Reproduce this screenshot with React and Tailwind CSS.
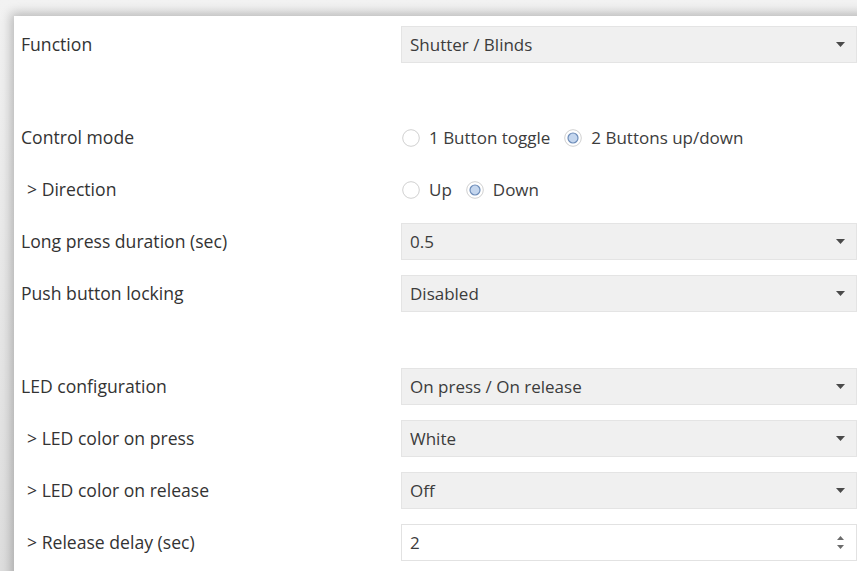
import React from "react";

const font = { fontFamily: '"Open Sans", "Noto Sans", sans-serif' };

function Caret() {
  return (
    <svg width="9" height="5" viewBox="0 0 9 5" className="shrink-0">
      <path d="M0 0 H9 L4.5 5 Z" fill="#4a4a4a" />
    </svg>
  );
}

function Spinner() {
  return (
    <div className="flex flex-col items-center gap-[5px] shrink-0">
      <svg width="7" height="4" viewBox="0 0 7 4">
        <path d="M0 4 H7 L3.5 0 Z" fill="#6b6b6b" />
      </svg>
      <svg width="7" height="4" viewBox="0 0 7 4">
        <path d="M0 0 H7 L3.5 4 Z" fill="#6b6b6b" />
      </svg>
    </div>
  );
}

function Radio({ checked }) {
  return (
    <svg width="18" height="18" viewBox="0 0 18 18" className="shrink-0">
      <circle cx="9" cy="9" r="8.3" fill="#ffffff" stroke="#d0d0d0" strokeWidth="1" />
      {checked && (
        <circle cx="9" cy="9" r="5" fill="#c4d6ee" stroke="#6d8cb8" strokeWidth="1.2" />
      )}
    </svg>
  );
}

function Select({ value }) {
  return (
    <div className="flex h-full flex-1 items-center justify-between border border-[#e4e4e4] bg-[#f0f0f0] pl-[8px] pr-[11px]">
      <span className="text-[#3c3c3c]">{value}</span>
      <Caret />
    </div>
  );
}

function NumberBox({ value }) {
  return (
    <div className="flex h-full flex-1 items-center justify-between border border-[#e2e2e2] bg-white pl-[8px] pr-[12px]">
      <span className="text-[#3c3c3c]">{value}</span>
      <Spinner />
    </div>
  );
}

function RadioGroup({ options, selected }) {
  return (
    <div className="flex h-full items-center gap-[14px] pl-[1px]">
      {options.map((o, i) => (
        <label key={o} className="flex items-center gap-[9px] text-[#3c3c3c]">
          <Radio checked={i === selected} />
          <span>{o}</span>
        </label>
      ))}
    </div>
  );
}

function Row({ label, sub, children, spaced }) {
  return (
    <div className={`flex h-[37px] items-center ${spaced ? "mt-[56px]" : "mt-[15px]"}`}>
      <div
        className={`w-[387px] shrink-0 text-[17.6px] text-[#333333] ${sub ? "pl-[13px]" : "pl-[7px]"}`}
      >
        {sub ? "> " : ""}
        {label}
      </div>
      <div className="flex h-full flex-1 items-center">{children}</div>
    </div>
  );
}

export default function App() {
  return (
    <div
      className="relative h-[571px] w-[857px] overflow-hidden bg-white text-[17px]"
      style={font}
    >
      <div className="absolute inset-0 bg-gradient-to-b from-[#f2f2f2] to-[#dedede]" />
      <div className="relative ml-[14px] mt-[16px] h-[700px] w-[900px] bg-white pt-[10px] shadow-[-3px_-3px_10px_rgba(0,0,0,0.24)]">
        <div className="w-[857px] -mt-[15px] pr-[14px]">
          <Row label="Function">
            <Select value="Shutter / Blinds" />
          </Row>
          <Row label="Control mode" spaced>
            <RadioGroup options={["1 Button toggle", "2 Buttons up/down"]} selected={1} />
          </Row>
          <Row label="Direction" sub>
            <RadioGroup options={["Up", "Down"]} selected={1} />
          </Row>
          <Row label="Long press duration (sec)">
            <Select value="0.5" />
          </Row>
          <Row label="Push button locking">
            <Select value="Disabled" />
          </Row>
          <Row label="LED configuration" spaced>
            <Select value="On press / On release" />
          </Row>
          <Row label="LED color on press" sub>
            <Select value="White" />
          </Row>
          <Row label="LED color on release" sub>
            <Select value="Off" />
          </Row>
          <Row label="Release delay (sec)" sub>
            <NumberBox value="2" />
          </Row>
        </div>
      </div>
    </div>
  );
}
